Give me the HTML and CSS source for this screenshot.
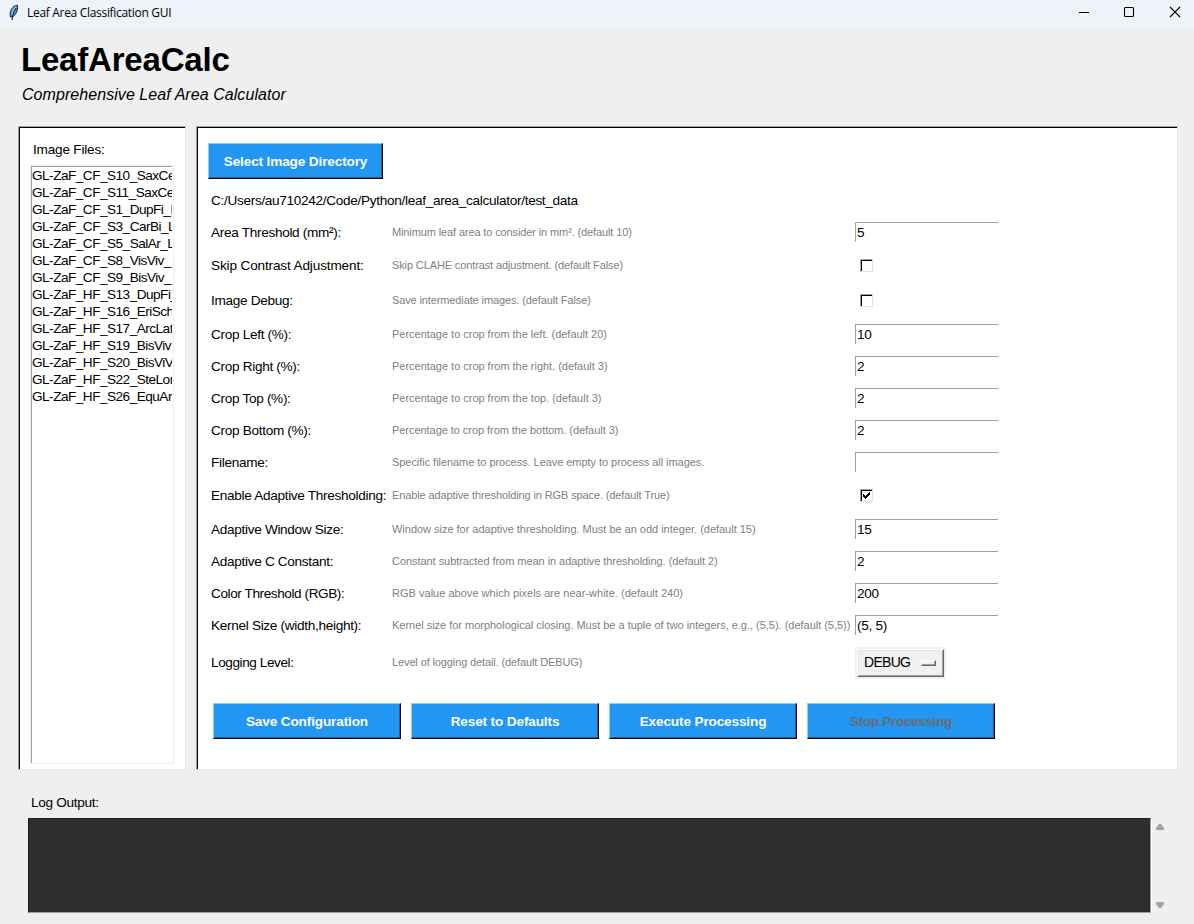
FILE: index.html
```
<!DOCTYPE html>
<html lang="en">
<head>
<meta charset="utf-8">
<title>Leaf Area Classification GUI</title>
<link rel="stylesheet" href="styles.css">
</head>
<body>
<div class="window">
  <header class="titlebar">
    <svg class="feather" width="12" height="17" viewBox="0 0 12 17"><path d="M2.500 13C1.400 9.500 2.500 6 5 3.200 6.500 1.700 8.500 1.200 9.500 1.300c.5 3-.3 6.500-2.300 9.200-1 1.500-2.500 2.500-4.700 2.500z" fill="#5b9be6" stroke="#1a2532" stroke-width="1"/><path d="M4 10C4.300 7 6 4 8 2.800" fill="none" stroke="#a9cdf5" stroke-width="1"/><path d="M4.200 16C4.200 12 5.600 8 8.200 4" fill="none" stroke="#15202c" stroke-width="1"/></svg>
    <span class="caption">Leaf Area Classification GUI</span>
    <svg class="controls" width="104" height="12" viewBox="0 0 104 12"><path d="M0 6.500h10" stroke="#000"/><rect x="45.500" y="1.500" width="9" height="9" rx="1" fill="none" stroke="#000" stroke-width="1.100"/><path d="M91 1l10 10M101 1L91 11" stroke="#000" stroke-width="1.100"/></svg>
  </header>
  <div class="heading">
    <h1>LeafAreaCalc</h1>
    <p>Comprehensive Leaf Area Calculator</p>
  </div>
  <main class="panes">
    <section class="frame files">
      <div class="files-label">Image Files:</div>
      <div class="list"><ul>
        <li>GL-ZaF_CF_S10_SaxCe</li>
        <li>GL-ZaF_CF_S11_SaxCe</li>
        <li>GL-ZaF_CF_S1_DupFi_L</li>
        <li>GL-ZaF_CF_S3_CarBi_L</li>
        <li>GL-ZaF_CF_S5_SalAr_L</li>
        <li>GL-ZaF_CF_S8_VisViv_</li>
        <li>GL-ZaF_CF_S9_BisViv_</li>
        <li>GL-ZaF_HF_S13_DupFi_</li>
        <li>GL-ZaF_HF_S16_EriSch</li>
        <li>GL-ZaF_HF_S17_ArcLat</li>
        <li>GL-ZaF_HF_S19_BisViv</li>
        <li>GL-ZaF_HF_S20_BisViV</li>
        <li>GL-ZaF_HF_S22_SteLon</li>
        <li>GL-ZaF_HF_S26_EquAr</li>
      </ul></div>
    </section>
    <section class="frame settings">
      <button class="btn select">Select Image Directory</button>
      <div class="path">C:/Users/au710242/Code/Python/leaf_area_calculator/test_data</div>
      <div class="row"><label>Area Threshold (mm²):</label><span class="hint tight">Minimum leaf area to consider in mm². (default 10)</span><div class="entry">5</div></div>
      <div class="row check"><label class="loose">Skip Contrast Adjustment:</label><span class="hint tight">Skip CLAHE contrast adjustment. (default False)</span><div class="box"></div></div>
      <div class="row check"><label>Image Debug:</label><span class="hint tight">Save intermediate images. (default False)</span><div class="box"></div></div>
      <div class="row"><label>Crop Left (%):</label><span class="hint">Percentage to crop from the left. (default 20)</span><div class="entry">10</div></div>
      <div class="row"><label>Crop Right (%):</label><span class="hint">Percentage to crop from the right. (default 3)</span><div class="entry">2</div></div>
      <div class="row"><label>Crop Top (%):</label><span class="hint">Percentage to crop from the top. (default 3)</span><div class="entry">2</div></div>
      <div class="row"><label>Crop Bottom (%):</label><span class="hint snug">Percentage to crop from the bottom. (default 3)</span><div class="entry">2</div></div>
      <div class="row"><label>Filename:</label><span class="hint snug">Specific filename to process. Leave empty to process all images.</span><div class="entry"></div></div>
      <div class="row check"><label>Enable Adaptive Thresholding:</label><span class="hint tight">Enable adaptive thresholding in RGB space. (default True)</span><div class="box"><svg width="7" height="7" viewBox="0 0 7 7" shape-rendering="crispEdges"><path d="M0 2h1v1h1v1h1v-1h1v-1h1v-1h1v-1h1v3h-1v1h-1v1h-1v1h-1v1h-1v-1h-1v-1h-1z"/></svg></div></div>
      <div class="row"><label>Adaptive Window Size:</label><span class="hint">Window size for adaptive thresholding. Must be an odd integer. (default 15)</span><div class="entry">15</div></div>
      <div class="row"><label>Adaptive C Constant:</label><span class="hint snug">Constant subtracted from mean in adaptive thresholding. (default 2)</span><div class="entry">2</div></div>
      <div class="row"><label class="close">Color Threshold (RGB):</label><span class="hint wide">RGB value above which pixels are near-white. (default 240)</span><div class="entry">200</div></div>
      <div class="row"><label>Kernel Size (width,height):</label><span class="hint">Kernel size for morphological closing. Must be a tuple of two integers, e.g., (5,5). (default (5,5))</span><div class="entry">(5, 5)</div></div>
      <div class="row menu-row"><label class="close">Logging Level:</label><span class="hint tight">Level of logging detail. (default DEBUG)</span><div class="menu"><div class="menu-face"><span>DEBUG</span><i></i></div></div></div>
      <div class="actions">
        <button class="btn save">Save Configuration</button>
        <button class="btn">Reset to Defaults</button>
        <button class="btn">Execute Processing</button>
        <button class="btn off" disabled>Stop Processing</button>
      </div>
    </section>
  </main>
  <section class="log">
    <div class="log-label">Log Output:</div>
    <div class="log-row">
      <div class="console"></div>
      <div class="scroll">
        <svg width="8" height="6" viewBox="0 0 8 6"><path d="M3 0h2l3 4v2H0V4z" fill="#a3a3a3"/></svg>
        <svg width="8" height="6" viewBox="0 0 8 6"><path d="M3 6h2l3-4V0H0v2z" fill="#a3a3a3"/></svg>
      </div>
    </div>
  </section>
</div>
</body>
</html>
```
FILE: styles.css
```
* { box-sizing: border-box; }
body { margin: 0; background: #efefef; font: 13.6px/17px "Liberation Sans", Arial, sans-serif; letter-spacing: -0.31px; color: #000; }
.window { width: 1194px; height: 924px; overflow: hidden; display: flex; flex-direction: column; }
.titlebar { height: 28px; background: #eef3f9; display: flex; align-items: flex-start; padding: 3px 11px 0 8px; }
.feather { margin-top: 1px; }
.caption { font: 12px/20px "Open Sans", "Noto Sans", sans-serif; margin-left: 7px; flex: 1; letter-spacing: -0.31px; }
.controls { margin-top: 3px; }
.heading { height: 98px; padding: 12px 0 0 22px; }
h1 { margin: 0 0 0 -1px; font-size: 33px; line-height: 40px; letter-spacing: -0.2px; }
.heading p { margin: 5px 0 0; font-size: 16px; line-height: 20px; font-style: italic; letter-spacing: 0.06px; }
.panes { display: flex; gap: 10px; padding-left: 18px; height: 644px; }
.frame { background: #fff; border: 1px solid; border-color: #a0a0a0 #e3e3e3 #e3e3e3 #a0a0a0; box-shadow: inset 1px 1px 0 #000; }
.files { width: 168px; padding: 14px 11px 5px; display: flex; flex-direction: column; }
.files-label { padding-left: 3px; height: 24px; letter-spacing: -0.2px; }
.list { flex: 1; width: 144px; border: 1px solid #efefef; display: flex; }
.list ul { flex: 1; width: 141px; margin: 0; padding: 0; list-style: none; border: solid #a0a0a0; border-width: 1px 0 0 1px; overflow: hidden; white-space: nowrap; margin-right: 1px; letter-spacing: -0.51px; }
.list li { height: 17px; }
.settings { width: 982px; padding: 16px 0 0 11px; }
.btn { display: block; width: 188px; height: 36px; padding: 0; font: bold 13.6px/17px "Liberation Sans", Arial, sans-serif; letter-spacing: -0.14px; color: #fff; background: #2196f3; border: 1px solid; border-color: #90cbf9 #000 #000 #90cbf9; box-shadow: inset -1px -1px 0 #1464a2; }
.btn.select { width: 175px; }
.btn.off { color: #6d6d6d; letter-spacing: -0.36px; }
.path { padding: 13px 0 0 3px; height: 37px; }
.row { display: grid; grid-template-columns: 181px 463px 143px; align-items: center; height: 32px; padding-left: 3px; white-space: nowrap; }
.row.check { height: 35px; }
.loose { letter-spacing: -0.15px; }
.close { letter-spacing: -0.42px; }
.hint { font-size: 11px; color: #808080; letter-spacing: -0.02px; }
.hint.tight { letter-spacing: -0.12px; }
.hint.snug { letter-spacing: -0.05px; }
.hint.wide { letter-spacing: 0.02px; }
.entry { height: 20px; border: solid #a0a0a0; border-width: 1px 0 0 1px; padding: 1px 0 0 1px; }
.box { width: 13px; height: 13px; margin-left: 5px; border: 1px solid; border-color: #a0a0a0 #e3e3e3 #e3e3e3 #a0a0a0; box-shadow: inset 1px 1px 0 #000; padding: 2px; }
.box svg { display: block; }
.row.menu-row { height: 43px; }
.menu { width: 91px; height: 32px; padding: 2px; background: #f0f0f0; }
.menu-face { height: 28px; border: 1px solid; border-color: #fff #696969 #696969 #fff; box-shadow: inset 1px 1px 0 #e3e3e3, inset -1px -1px 0 #a0a0a0; display: flex; align-items: center; justify-content: space-between; padding: 0 7px 0 6px; font-size: 14px; letter-spacing: -0.7px; }
.menu-face i { width: 15px; height: 6px; border: 1px solid; border-color: #fff #696969 #696969 #fff; box-shadow: inset -1px -1px 0 #a0a0a0; }
.actions { display: flex; gap: 10px; padding: 19px 0 0 5px; }
.log { flex: 1; padding: 24px 0 0 28px; }
.log-label { padding-left: 3px; height: 24px; }
.log-row { display: flex; height: 95px; }
.console { width: 1123px; background: #2e2e2e; border: 1px solid; border-color: #1c1c1c #a0a0a0 #a0a0a0 #1c1c1c; box-shadow: 1px 0 0 #fff; }
.scroll { display: flex; flex-direction: column; justify-content: space-between; padding: 6px 0 5px 5px; }
.scroll svg { display: block; }
```
